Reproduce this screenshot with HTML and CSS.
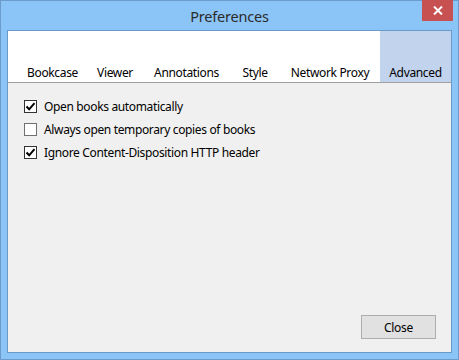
FILE: index.html
```html
<!DOCTYPE html>
<html>
<head>
<meta charset="utf-8">
<link rel="stylesheet" href="styles.css">
</head>
<body>
<div class="window">
  <div class="titlebar">
    <span class="title">Preferences</span>
    <div class="close-x">
      <svg width="10" height="9" viewBox="0 0 10 9"><path d="M1 0.5 L9 8.5 M9 0.5 L1 8.5" stroke="#fff" stroke-width="2"/></svg>
    </div>
  </div>
  <div class="client">
    <div class="tabs">
      <div class="tab t1">Bookcase</div>
      <div class="tab t2">Viewer</div>
      <div class="tab t3">Annotations</div>
      <div class="tab t4">Style</div>
      <div class="tab t5">Network Proxy</div>
      <div class="tab t6 active">Advanced</div>
    </div>
    <div class="content">
      <label class="row"><span class="box checked"><svg width="11" height="11" viewBox="0 0 11 11"><path d="M1.5 5.5 L4.2 8.3 L9.5 2.2" fill="none" stroke="#000" stroke-width="2"/></svg></span>Open books automatically</label>
      <label class="row"><span class="box unchecked"></span>Always open temporary copies of books</label>
      <label class="row"><span class="box checked"><svg width="11" height="11" viewBox="0 0 11 11"><path d="M1.5 5.5 L4.2 8.3 L9.5 2.2" fill="none" stroke="#000" stroke-width="2"/></svg></span>Ignore Content-Disposition HTTP header</label>
    </div>
    <div class="footer">
      <button class="btn">Close</button>
    </div>
  </div>
</div>
</body>
</html>
```
FILE: styles.css
```css
html, body {
  margin: 0;
  padding: 0;
}
body {
  font-family: "Noto Sans", "Open Sans", sans-serif;
  font-size: 12px;
  color: #000;
}
.window {
  width: 459px;
  height: 360px;
  box-sizing: border-box;
  border: 1px solid #6c9ccc;
  background: #8bc4f7;
  display: flex;
  flex-direction: column;
  padding: 0 6px 6px 6px;
}
.titlebar {
  position: relative;
  height: 29px;
  display: flex;
  align-items: center;
  justify-content: center;
}
.title {
  font-size: 14.5px;
  color: #2b2b2b;
  margin-top: 0;
  letter-spacing: -0.2px;
}
.close-x {
  position: absolute;
  right: -1px;
  top: -1px;
  width: 31px;
  height: 21px;
  background: #c75050;
  display: flex;
  align-items: center;
  justify-content: center;
}
.client {
  flex: 1;
  border: 1px solid #6a9acb;
  background: #f0f0f0;
  display: flex;
  flex-direction: column;
}
.tabs {
  height: 51px;
  background: #fff;
  border-bottom: 1px solid #a0a0a0;
  display: flex;
  align-items: stretch;
  padding-left: 10px;
}
.tab {
  display: flex;
  align-items: flex-end;
  justify-content: center;
  padding-bottom: 1px;
  box-sizing: border-box;
  white-space: nowrap;
  color: #000;
  letter-spacing: -0.35px;
}
.t1 { width: 69px; }
.t2 { width: 56px; }
.t3 { width: 87px; }
.t4 { width: 50px; }
.t5 { width: 100px; }
.t6 { width: 71px; }
.tab.active {
  background: #c2d3ee;
}
.content {
  padding: 12px 16px 0 16px;
  display: flex;
  flex-direction: column;
}
.row {
  height: 23px;
  display: flex;
  align-items: center;
  gap: 7px;
  letter-spacing: -0.35px;
}
.box {
  width: 13px;
  height: 13px;
  box-sizing: border-box;
  border: 1px solid #333;
  background: #fff;
  display: flex;
  align-items: center;
  justify-content: center;
}
.box.unchecked {
  border-color: #707070;
}
.footer {
  margin-top: auto;
  display: flex;
  justify-content: flex-end;
  padding: 0 15px 13px 0;
}
.btn {
  width: 75px;
  height: 24px;
  border: 1px solid #adadad;
  background: #e1e1e1;
  font-family: "Noto Sans", "Open Sans", sans-serif;
  font-size: 12px;
  color: #000;
  padding: 0;
  letter-spacing: -0.3px;
}
```
